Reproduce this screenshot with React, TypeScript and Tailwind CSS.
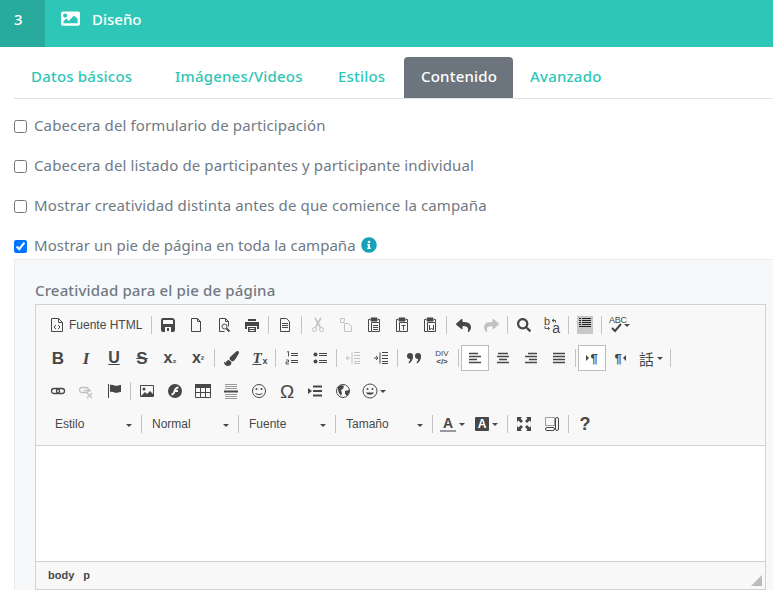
import React from 'react';
import { FaImage, FaInfoCircle, FaPaintBrush, FaReply, FaSearch, FaShare } from 'react-icons/fa';

const Svg: React.FC<{ children: React.ReactNode; className?: string }> = ({ children, className = '' }) => (
  <svg viewBox="0 0 16 16" className={`h-4 w-4 ${className}`} fill="none" stroke="currentColor" strokeWidth="1">
    {children}
  </svg>
);

const Btn: React.FC<{ children: React.ReactNode; off?: boolean; on?: boolean; className?: string }> = ({
  children,
  off,
  on,
  className = 'w-7',
}) => (
  <div
    className={`flex h-[26px] shrink-0 items-center justify-center ${className} ${off ? 'opacity-30' : ''} ${
      on ? 'border border-[#bcbcbc] bg-white' : ''
    }`}
  >
    {children}
  </div>
);

const Sep = () => <div className="mx-[2px] mt-[4px] h-[18px] w-px shrink-0 bg-[#c4c4c4]" />;

const Caret = ({ className = '' }: { className?: string }) => (
  <span className={`inline-block h-0 w-0 border-x-[3px] border-t-[3px] border-x-transparent border-t-[#484848] ${className}`} />
);

const Row: React.FC<{ children: React.ReactNode }> = ({ children }) => (
  <div className="flex h-[33px] items-start pl-2">{children}</div>
);

const Combo: React.FC<{ label: string; className: string; pad: string }> = ({ label, className, pad }) => (
  <div className={`flex h-[26px] shrink-0 items-center justify-between pr-[7px] ${className} ${pad}`}>
    <span className="text-xs text-[#484848]">{label}</span>
    <Caret className="translate-y-[1px]" />
  </div>
);

const Lines = ({ x = 5, y = 6, w = 6 }: { x?: number; y?: number; w?: number }) => (
  <path d={`M${x} ${y}.5h${w}M${x} ${y + 2}.5h${w}M${x} ${y + 4}.5h${w}`} />
);

const Clip = ({ children }: { children?: React.ReactNode }) => (
  <Svg>
    <path d="M4 2.500H2.500v12H5M12 2.500h1.500V5" />
    <path d="M5 1h6v3H5z" fill="currentColor" />
    <path d="M5.500 5.500h8v9h-8z" />
    {children}
  </Svg>
);

const tabs = [
  { label: 'Datos básicos', width: 'w-[144px]' },
  { label: 'Imágenes/Videos', width: 'w-[163px]' },
  { label: 'Estilos', width: 'w-[83px]' },
  { label: 'Contenido', width: 'w-[109px]', active: true },
  { label: 'Avanzado', width: 'w-[106px]' },
];

const checks = [
  'Cabecera del formulario de participación',
  'Cabecera del listado de participantes y participante individual',
  'Mostrar creatividad distinta antes de que comience la campaña',
];

const Toolbar = () => (
  <div className="h-[141px] border-b border-[#d1d1d1] bg-[#f8f8f8] pt-[7px] font-['Liberation_Sans',sans-serif] text-[#474747]">
    <Row>
      <div className="flex h-[26px] w-[105px] shrink-0 items-center pl-[5px]">
        <Svg>
          <path d="M2.500 1.500h7l4 4v9h-11z" />
          <path d="M9.500 1.500v4h4M7 8l-2 2 2 2M9 8l2 2-2 2" />
        </Svg>
        <span className="ml-[4px] text-xs text-[#484848]">Fuente HTML</span>
      </div>
      <Sep />
      <Btn>
        <Svg>
          <path
            fillRule="evenodd"
            fill="currentColor"
            stroke="none"
            d="M1 3a2 2 0 0 1 2-2h10l2 2v10a2 2 0 0 1-2 2H3a2 2 0 0 1-2-2zM3 3v4h10V3zM5 10v5h6v-5zM7 11h2v3H7z"
          />
        </Svg>
      </Btn>
      <Btn>
        <Svg>
          <path d="M3.500 1.500h6l3 3v10h-9zM9.500 1.500v3h3" />
        </Svg>
      </Btn>
      <Btn>
        <Svg>
          <path d="M3.500 14.500v-13h6l3 3v5M9.500 1.500v3h3M3.500 14.500h5" />
          <circle cx="8.500" cy="9.500" r="2.500" />
          <path d="M10.500 11.500l3 3" strokeWidth="1.800" />
        </Svg>
      </Btn>
      <Btn>
        <Svg>
          <path fill="currentColor" stroke="none" fillRule="evenodd" d="M1 5h14v7h-2V9H3v3H1zM4 2h8v2H4zM4 10h8v5H4zM5.500 11v1h5v-1zM5.500 13v1h5v-1z" />
        </Svg>
      </Btn>
      <Sep />
      <Btn>
        <Svg>
          <path d="M3.500 1.500h6l3 3v10h-9z" />
          <Lines x={5} y={6} w={6} />
        </Svg>
      </Btn>
      <Sep />
      <Btn off>
        <Svg>
          <circle cx="4.500" cy="12.500" r="2" />
          <circle cx="11.500" cy="12.500" r="2" />
          <path d="M5.500 10.500L11 1M10.500 10.500L5 1" strokeWidth="1.500" />
        </Svg>
      </Btn>
      <Btn off>
        <Svg>
          <path d="M6 5.500H2.500v-4h4zM6.500 6.500h4l3 3v5h-7z" />
        </Svg>
      </Btn>
      <Btn>
        <Clip>
          <Lines x={7} y={8} w={5} />
        </Clip>
      </Btn>
      <Btn>
        <Clip>
          <path d="M7.500 8.500h4M9.500 8.500v4.500" />
        </Clip>
      </Btn>
      <Btn>
        <Clip>
          <path d="M7.500 8v5l2-2 2 2V8" />
        </Clip>
      </Btn>
      <Sep />
      <Btn>
        <FaReply className="h-[15px] w-[15px]" />
      </Btn>
      <Btn off>
        <FaShare className="h-[15px] w-[15px]" />
      </Btn>
      <Sep />
      <Btn>
        <FaSearch className="h-[14px] w-[14px]" />
      </Btn>
      <Btn>
        <div className="relative h-4 w-4">
          <span className="absolute left-0 top-[-2px] text-[11px] leading-3">b</span>
          <span className="absolute bottom-[-1px] right-0 text-[14px] leading-3">a</span>
          <Svg className="absolute inset-0">
            <path d="M8 3.500h3.500v2M10 2 8 3.500 10 5M1 9v2.500h4M4 10l1.500 1.500L4 13" strokeWidth="0.900" />
          </Svg>
        </div>
      </Btn>
      <Sep />
      <Btn>
        <div className="flex h-[18px] w-[16px] items-start bg-[#c8c8c8]">
          <Svg>
            <path d="M2 2.500h2M5 2.500h9M2 4.500h2M5 4.500h9M2 6.500h2M5 6.500h9M2 8.500h2M5 8.500h9M2 10.500h12" stroke="#222" />
          </Svg>
        </div>
      </Btn>
      <Sep />
      <div className="flex h-[26px] w-[36px] shrink-0 items-center pl-[5px]">
        <div className="relative h-4 w-4">
          <span className="absolute left-0 top-[-2px] text-[9px] leading-[10px] tracking-[-0.3px]">ABC</span>
          <Svg className="absolute inset-0">
            <path d="M3 11l3 3 6-7" strokeWidth="2" />
          </Svg>
        </div>
        <Caret className="ml-[-1px]" />
      </div>
    </Row>
    <Row>
      <Btn>
        <span className="text-[17px] font-bold leading-none">B</span>
      </Btn>
      <Btn>
        <span className="font-['Liberation_Serif',serif] text-[17px] font-bold italic leading-none">I</span>
      </Btn>
      <Btn>
        <span className="text-[16px] font-bold leading-none underline">U</span>
      </Btn>
      <Btn>
        <span className="text-[17px] font-bold leading-none line-through">S</span>
      </Btn>
      <Btn>
        <span className="text-[16px] font-bold leading-none">
          x<span className="text-[9px]">₂</span>
        </span>
      </Btn>
      <Btn>
        <span className="text-[16px] font-bold leading-none">
          x<span className="text-[10px]">²</span>
        </span>
      </Btn>
      <Sep />
      <Btn>
        <FaPaintBrush className="h-[15px] w-[15px]" />
      </Btn>
      <Btn>
        <span className="relative -translate-x-[2px] font-['Liberation_Serif',serif] text-[15px] font-bold italic leading-none underline">
          T<span className="absolute -right-[6px] top-[6px] font-['Liberation_Sans',sans-serif] text-[9px] not-italic">x</span>
        </span>
      </Btn>
      <Sep />
      <Btn>
        <Svg>
          <path d="M7 3.500h7M7 5.500h7M7 10.500h7M7 12.500h7" strokeWidth="1.100" />
          <path d="M3 2l1.500-.5v5M2 10h2.500v2H2v2h3" strokeWidth="0.900" />
        </Svg>
      </Btn>
      <Btn>
        <Svg>
          <circle cx="3.500" cy="4.500" r="2" fill="currentColor" stroke="none" />
          <circle cx="3.500" cy="11.500" r="2" fill="currentColor" stroke="none" />
          <path d="M7 3.500h8M7 5.500h8M7 10.500h8M7 12.500h8" />
        </Svg>
      </Btn>
      <Sep />
      <Btn off>
        <Svg>
          <path d="M7 2.500v11M9 2.500h6M9 5.500h6M9 8.500h6M9 11.500h6M9 13.500h6M1 8h4M3 6L1 8l2 2" />
        </Svg>
      </Btn>
      <Btn>
        <Svg>
          <path d="M7 2.500v11M9 2.500h6M9 5.500h6M9 8.500h6M9 11.500h6M9 13.500h6M1 8h4M3 6l2 2-2 2" />
        </Svg>
      </Btn>
      <Sep />
      <Btn>
        <Svg>
          <circle cx="4" cy="6" r="3" fill="currentColor" stroke="none" />
          <circle cx="12" cy="6" r="3" fill="currentColor" stroke="none" />
          <path fill="currentColor" stroke="none" d="M7 6c0 3-1 6-4 7.500l-.5-1C4 11 4.500 9 4 8zM15 6c0 3-1 6-4 7.500l-.5-1C12 11 12.500 9 12 8z" />
        </Svg>
      </Btn>
      <Btn>
        <div className="flex flex-col items-center text-[8px] leading-[8px]">
          <span>DIV</span>
          <span className="font-bold">&lt;/&gt;</span>
        </div>
      </Btn>
      <Sep />
      <Btn on>
        <Svg>
          <path d="M2 3.500h9M2 6.500h12M2 9.500h8M2 12.500h12" strokeWidth="1.600" />
        </Svg>
      </Btn>
      <Btn>
        <Svg>
          <path d="M3 3.500h10M2 6.500h12M4 9.500h8M2 12.500h12" strokeWidth="1.600" />
        </Svg>
      </Btn>
      <Btn>
        <Svg>
          <path d="M5 3.500h9M2 6.500h12M6 9.500h8M2 12.500h12" strokeWidth="1.600" />
        </Svg>
      </Btn>
      <Btn>
        <Svg>
          <path d="M2 3.500h12M2 6.500h12M2 9.500h12M2 12.500h12" strokeWidth="1.600" />
        </Svg>
      </Btn>
      <Sep />
      <Btn on>
        <span className="flex items-center text-[13px] font-bold leading-none">
          <span className="mr-[1px] h-0 w-0 border-y-[3px] border-l-[3px] border-y-transparent border-l-[#474747]" />¶
        </span>
      </Btn>
      <Btn>
        <span className="flex items-center text-[13px] font-bold leading-none">
          ¶<span className="ml-[1px] h-0 w-0 border-y-[3px] border-r-[3px] border-y-transparent border-r-[#474747]" />
        </span>
      </Btn>
      <div className="flex h-[26px] w-[34px] shrink-0 items-center pl-[5px]">
        <span className="font-['Noto_Sans_CJK_TC',sans-serif] text-[15px] leading-none">話</span>
        <Caret className="ml-[3px]" />
      </div>
      <Sep />
    </Row>
    <Row>
      <Btn>
        <Svg>
          <rect x="1.500" y="5.500" width="8" height="5" rx="2.500" strokeWidth="1.300" />
          <rect x="6.500" y="5.500" width="8" height="5" rx="2.500" strokeWidth="1.300" />
        </Svg>
      </Btn>
      <Btn off>
        <Svg>
          <rect x="1.500" y="4.500" width="9" height="5" rx="2.500" strokeWidth="1.300" />
          <path d="M6 7.500h7M9 10l5 5M14 10l-5 5" strokeWidth="1.300" />
        </Svg>
      </Btn>
      <Btn>
        <Svg>
          <path d="M2.500 1v14" />
          <path fill="currentColor" stroke="none" d="M4 2c3-1 4 .8 6 .8S13 2 15 2v7c-2 0-3 .8-5 .8S7 8 4 9z" />
        </Svg>
      </Btn>
      <Sep />
      <Btn>
        <Svg>
          <path d="M1.500 2.500h13v11h-13z" />
          <circle cx="5" cy="6" r="1.500" fill="currentColor" stroke="none" />
          <path fill="currentColor" stroke="none" d="M2 13l4-4 2 2 3-3 3 3v2z" />
        </Svg>
      </Btn>
      <Btn>
        <Svg>
          <path
            fillRule="evenodd"
            fill="currentColor"
            stroke="none"
            d="M8 1a7 7 0 1 0 0 14A7 7 0 0 0 8 1zM11.500 3.500v2c-1.500 0-2 .8-2.300 1.500H11v2H8.300C7.500 11 6.500 12.500 4.500 12.500v-2c1 0 1.500-.8 2-2.200C7.300 6 8.500 3.500 11.500 3.500z"
          />
        </Svg>
      </Btn>
      <Btn>
        <Svg>
          <path fill="currentColor" stroke="none" d="M0 1h16v4H0z" />
          <path d="M.5 4.500h15v10H.5zM5.500 4.500v10M10.500 4.500v10M.5 9.500h15" />
        </Svg>
      </Btn>
      <Btn>
        <Svg>
          <path d="M2 1.500h12M2 3.500h12M2 5.500h12M2 11.500h12M2 13.500h12M2 15.500h12" stroke="#999" />
          <path d="M1 8.500h14" strokeWidth="2" />
        </Svg>
      </Btn>
      <Btn>
        <Svg>
          <circle cx="8" cy="8" r="6.500" />
          <circle cx="5.500" cy="6" r="1" fill="currentColor" stroke="none" />
          <circle cx="10.500" cy="6" r="1" fill="currentColor" stroke="none" />
          <path d="M4.500 10c1 2 6 2 7 0" />
        </Svg>
      </Btn>
      <Btn>
        <span className="text-[19px] leading-none">Ω</span>
      </Btn>
      <Btn>
        <Svg>
          <path fill="currentColor" stroke="none" d="M1 5l4 3-4 3z" />
          <path d="M6 3.500h9M6 8h9M6 12.500h9" strokeWidth="2" />
        </Svg>
      </Btn>
      <Btn>
        <Svg>
          <circle cx="8" cy="8" r="6.500" />
          <path fill="currentColor" stroke="none" d="M3 4l3-2 3 1-1 3-2 1 1 3-1 3-2-3-1-3zM10 8l4-1v3l-2 3-2-2z" />
        </Svg>
      </Btn>
      <div className="flex h-[26px] w-[36px] shrink-0 items-center pl-[5px]">
        <Svg>
          <circle cx="8" cy="8" r="7" />
          <circle cx="5.500" cy="6" r="1" fill="currentColor" stroke="none" />
          <circle cx="10.500" cy="6" r="1" fill="currentColor" stroke="none" />
          <path d="M4 9.500c1 3 7 3 8 0z" fill="currentColor" stroke="none" />
        </Svg>
        <Caret className="ml-[2px]" />
      </div>
    </Row>
    <Row>
      <Combo label="Estilo" className="w-[95px]" pad="pl-[11px]" />
      <Sep />
      <Combo label="Normal" className="w-[92px]" pad="pl-[8px]" />
      <Sep />
      <Combo label="Fuente" className="w-[92px]" pad="pl-[8px]" />
      <Sep />
      <Combo label="Tamaño" className="w-[92px]" pad="pl-[8px]" />
      <Sep />
      <div className="flex h-[26px] w-[35px] shrink-0 items-center pl-[5px]">
        <span className="w-[16px] border-b-2 border-[#999] text-center text-[14px] font-bold leading-[14px]">A</span>
        <Caret className="ml-[3px]" />
      </div>
      <div className="flex h-[26px] w-[35px] shrink-0 items-center pl-[5px]">
        <span className="w-[14px] rounded-[1px] bg-[#474747] text-center text-[12px] font-bold leading-[14px] text-white">A</span>
        <Caret className="ml-[3px]" />
      </div>
      <Sep />
      <Btn>
        <Svg>
          <path fill="currentColor" stroke="none" d="M1 1h5L4.500 2.500 7 5 5 7 2.500 4.500 1 6zM15 1v5l-1.500-1.500L11 7 9 5l2.500-2.500L10 1zM1 15v-5l1.500 1.500L5 9l2 2-2.500 2.500L6 15zM15 15h-5l1.500-1.500L9 11l2-2 2.500 2.500L15 10z" />
        </Svg>
      </Btn>
      <Btn>
        <Svg>
          <path d="M1.500 1.500h9v8h-9z" strokeDasharray="1 1" />
          <rect x="1.500" y="11.500" width="9" height="3" rx="1.500" />
          <rect x="11.500" y="1.500" width="3" height="13" rx="1.500" />
        </Svg>
      </Btn>
      <Sep />
      <Btn>
        <span className="text-[18px] font-bold leading-none">?</span>
      </Btn>
    </Row>
  </div>
);

export default function App() {
  return (
    <div className="h-[596px] w-full overflow-hidden bg-white font-['Noto_Sans',sans-serif]">
      <div className="flex h-[47px] items-center bg-[#2ec6b6] text-white">
        <div className="flex h-full w-[45px] items-center bg-[#28aa9d] pb-[9px] pl-[14px] text-[15px] font-medium">3</div>
        <FaImage className="ml-[16px] mb-[11px] h-[19px] w-[19px]" />
        <span className="ml-[12px] mb-[8px] text-[15px] font-medium">Diseño</span>
      </div>
      <div className="ml-[14px] mt-[10px] flex h-[42px] border-b border-[#dee2e6]">
        {tabs.map((tab) => (
          <div
            key={tab.label}
            className={`flex h-[41px] items-center rounded-t-[4px] pb-[2px] pl-[17px] text-[15px] font-medium tracking-[0.2px] ${tab.width} ${
              tab.active ? 'bg-[#6c757d] text-white' : 'text-[#2ec6b6]'
            }`}
          >
            {tab.label}
          </div>
        ))}
      </div>
      <div className="pl-[14px] pt-[7px] text-[15px] tracking-[0.12px] text-[#6f7a85]">
        {checks.map((label) => (
          <label key={label} className="flex h-10 items-center">
            <input type="checkbox" className="m-0 h-[13px] w-[13px]" />
            <span className="-mt-[2px] ml-[7px]">{label}</span>
          </label>
        ))}
        <label className="flex h-10 items-center">
          <input type="checkbox" defaultChecked className="m-0 h-[13px] w-[13px]" />
          <span className="-mt-[2px] ml-[7px] tracking-[0.03px]">Mostrar un pie de página en toda la campaña</span>
          <FaInfoCircle className="ml-[5px] -mt-[2px] h-4 w-4 text-[#17a2b8]" />
        </label>
      </div>
      <div className="ml-[14px] -mt-[7px] border-l border-t border-[#e9ecef] bg-[#f7f8fa] pl-5 pr-[7px] pt-5">
        <div className="text-[15px] font-medium leading-5 tracking-[0.15px] text-[#6f7a85]">Creatividad para el pie de página</div>
        <div className="mt-[4px] border border-[#d1d1d1]">
          <Toolbar />
          <div className="h-[115px] bg-white" />
          <div className="relative flex h-[28px] items-center border-t border-[#d1d1d1] bg-[#f8f8f8] pl-3 font-['Liberation_Sans',sans-serif] text-[11px] font-bold text-[#484848]">
            <span>body</span>
            <span className="ml-[9px]">p</span>
            <span className="absolute bottom-[3px] right-[3px] h-0 w-0 border-b-[11px] border-l-[11px] border-b-[#bcbcbc] border-l-transparent" />
          </div>
        </div>
      </div>
    </div>
  );
}
